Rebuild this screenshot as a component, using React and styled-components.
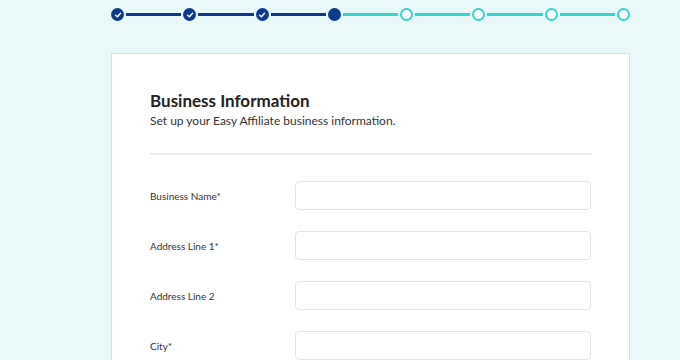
import React from "react";
import styled, { createGlobalStyle } from "styled-components";

const GlobalStyle = createGlobalStyle`
  html, body {
    margin: 0;
    padding: 0;
    background: #e9f8f8;
    font-family: Lato, "Noto Sans", sans-serif;
    color: #222;
  }
`;

const Page = styled.div`
  width: 519px;
  margin-left: 111px;
  padding-top: 8px;
  height: 352px;
  overflow: hidden;
`;

const Stepper = styled.div`
  display: flex;
  align-items: center;
  height: 13px;
  margin-bottom: 32px;
`;

const Dot = styled.div`
  flex: 0 0 auto;
  width: 13px;
  height: 13px;
  box-sizing: border-box;
  border-radius: 50%;
  display: flex;
  align-items: center;
  justify-content: center;
  background: ${(p) => (p.state === "todo" ? "#ffffff" : "#0b3a8f")};
  border: 2px solid ${(p) => (p.state === "todo" ? "#2fd6d0" : "#0b3a8f")};
`;

const Line = styled.div`
  flex: 1;
  height: 3px;
  margin: 0 2px;
  background: ${(p) => (p.done ? "#0b3a8f" : "#2fd6d0")};
`;

const Card = styled.div`
  background: #fff;
  border: 1px solid #bde9ea;
  padding: 36px 38px 0 38px;
  height: 400px;
`;

const Title = styled.h1`
  margin: 0;
  font-size: 17px;
  line-height: 22px;
  font-weight: 700;
  color: #222;
`;

const Subtitle = styled.p`
  margin: 0;
  font-size: 12px;
  line-height: 18px;
  color: #333;
`;

const Divider = styled.hr`
  border: 0;
  height: 2px;
  background: #ececec;
  margin: 23px 0 26px;
`;

const Form = styled.div`
  display: flex;
  flex-direction: column;
  gap: 21px;
`;

const Row = styled.div`
  display: flex;
  align-items: center;
`;

const Label = styled.label`
  width: 145px;
  font-size: 10px;
  color: #333;
`;

const Input = styled.input`
  width: 296px;
  height: 29px;
  box-sizing: border-box;
  border: 1px solid #e4e4e4;
  border-radius: 4px;
  background: #fff;
  outline: none;
`;

const Check = () => (
  <svg width="8" height="8" viewBox="0 0 10 10">
    <path d="M2 5.2 L4.2 7.2 L8.2 2.8" fill="none" stroke="#fff" strokeWidth="1.8" strokeLinecap="round" strokeLinejoin="round" />
  </svg>
);

const steps = ["done", "done", "done", "current", "todo", "todo", "todo", "todo"];
const fields = ["Business Name*", "Address Line 1*", "Address Line 2", "City*"];

export default function App() {
  return (
    <>
      <GlobalStyle />
      <Page>
        <Stepper>
          {steps.map((s, i) => (
            <React.Fragment key={i}>
              {i > 0 && <Line done={i <= 3} />}
              <Dot state={s}>{s === "done" && <Check />}</Dot>
            </React.Fragment>
          ))}
        </Stepper>
        <Card>
          <Title>Business Information</Title>
          <Subtitle>Set up your Easy Affiliate business information.</Subtitle>
          <Divider />
          <Form>
            {fields.map((f) => (
              <Row key={f}>
                <Label>{f}</Label>
                <Input />
              </Row>
            ))}
          </Form>
        </Card>
      </Page>
    </>
  );
}
